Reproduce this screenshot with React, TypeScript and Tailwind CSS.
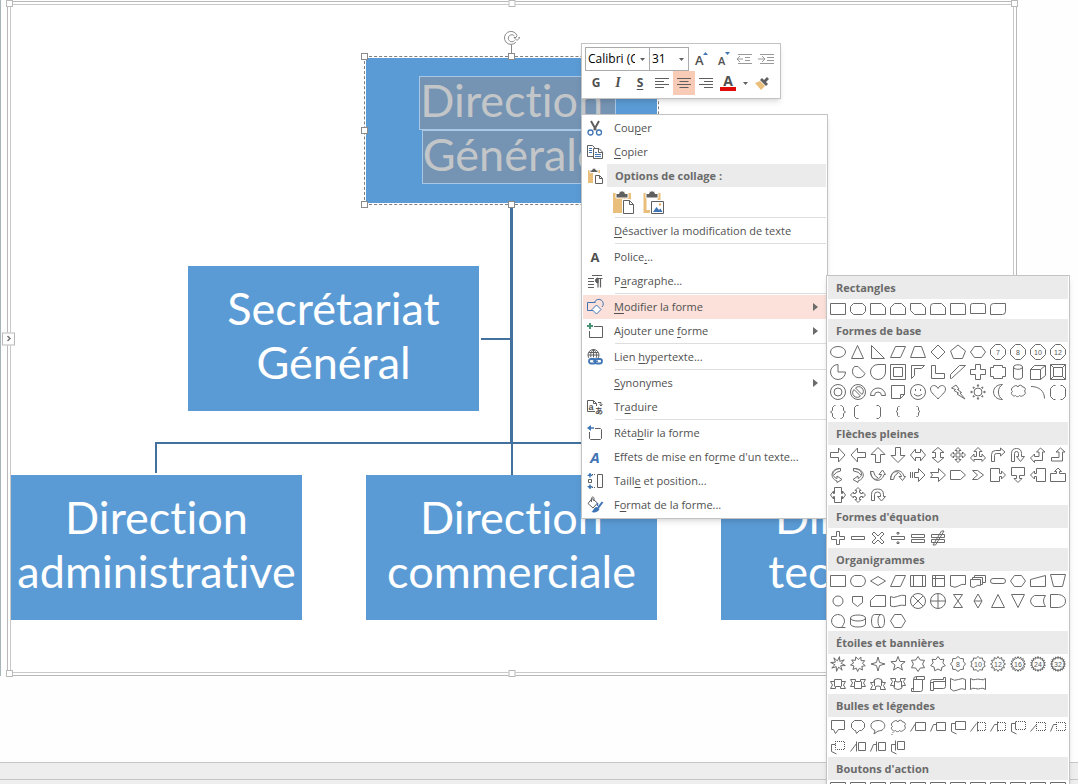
import type { ReactNode } from 'react';

type Shape = string | { d: string; label?: string; dashed?: string };

// Path of a star with n branches centred in a 16x16 box
function star(n: number, outer: number, inner: number, turn = 0) {
  const points: string[] = [];
  for (let i = 0; i < n * 2; i++) {
    const r = i % 2 ? inner : outer;
    const a = (Math.PI * i) / n - Math.PI / 2 + turn;
    points.push(`${(8 + r * Math.cos(a)).toFixed(2)} ${(8 + r * Math.sin(a)).toFixed(2)}`);
  }
  return `M${points.join('L')}z`;
}

const OCTAGON = 'M5.5.5h5l5 5v5l-5 5h-5l-5-5v-5z';
const CIRCLE = 'M.5 8a7.5 7.5 0 1 0 15 0a7.5 7.5 0 1 0-15 0z';
const CLOUD =
  'M2.5 7.5a2.5 2.5 0 0 1 1-4.5a2.5 2.5 0 0 1 4.5 0a2.3 2.3 0 0 1 4.5 0a2.3 2.3 0 0 1 2 4a2.3 2.3 0 0 1-1 4a2.5 2.5 0 0 1-4 .5a2.3 2.3 0 0 1-4 0a2.3 2.3 0 0 1-3.5-1a1.8 1.8 0 0 1 .5-3z';

const GALLERY: { title: string; shapes: Shape[] }[] = [
  {
    title: 'Rectangles',
    shapes: [
      'M.5 2.5h15v11h-15z',
      'M3.5 2.5h9l3 3v5l-3 3h-9l-3-3v-5z',
      'M.5 2.5h11l4 4v7h-15z',
      'M4.5 2.5h7l4 4v7h-15v-7z',
      'M.5 2.5h11l4 4v7h-11l-4-4z',
      'M3.5 2.5h8l4 4v7h-15v-8q0-3 3-3z',
      'M.5 2.5h13q2 0 2 2v9h-15z',
      'M2.5 2.5h11q2 0 2 2v8h-15v-8q0-2 2-2z',
      'M3.5 2.5h12v8q0 3-3 3h-12v-8q0-3 3-3z',
    ],
  },
  {
    title: 'Formes de base',
    shapes: [
      'M.5 8a7.5 5.5 0 1 0 15 0a7.5 5.5 0 1 0-15 0z',
      'M7.5 1.5l6 13h-12z',
      'M1.5 1.5v13h13z',
      'M5.5 2.5h10l-5 11h-10z',
      'M4.5 2.5h7l4 11h-15z',
      'M8 1l7 7-7 7-7-7z',
      'M8 1l7.5 6-3 7.5h-9l-3-7.5z',
      'M4.5 2.5h7l4 5.5-4 5.5h-7l-4-5.5z',
      { d: OCTAGON, label: '7' },
      { d: OCTAGON, label: '8' },
      { d: OCTAGON, label: '10' },
      { d: OCTAGON, label: '12' },
      'M8 .5A7.5 7.5 0 1 0 15.5 8H8z',
      'M4.5 2.5A6.5 6.5 0 1 0 15 9.5L8 2.5z',
      'M15.5.5v7.5a7.5 7.5 0 1 1-7.5-7.5z',
      'M.5.5h15v15h-15zM3.5 3.5h9v9h-9z',
      'M1.5 1.5h13l-3 3h-7v7l-3 3z',
      'M1.5 1.5h4v8h9v5h-13z',
      'M.5 10.5l9-9h6l-14 13h-1z',
      'M5.5.5h5v5h5v5h-5v5h-5v-5h-5v-5h5z',
      'M3.5 1.5h9v2h3v9h-3v2h-9v-2h-3v-9h3z',
      'M3.5 3v10c0 3 9 3 9 0v-10c0-3-9-3-9 0c0 3 9 3 9 0',
      'M.5 5.5h10v10h-10zM.5 5.5l4-4h11v10l-5 4M10.5 5.5l5-4',
      'M.5.5h15v15h-15zM3.5 3.5h9v9h-9zM.5.5l3 3M15.5.5l-3 3M.5 15.5l3-3M15.5 15.5l-3-3',
      `${CIRCLE}M4 8a4 4 0 1 0 8 0a4 4 0 1 0-8 0z`,
      `${CIRCLE}M4 5.5l6.5 6.5A4.5 4.5 0 0 1 4 5.5zM5.5 4l6.5 6.5A4.5 4.5 0 0 0 5.5 4z`,
      'M.5 11.5a7.5 7.5 0 0 1 15 0h-4a3.5 3.5 0 0 0-7 0z',
      'M1.5 1.5h13v9l-4 4h-9zM10.5 14.5v-4h4',
      `${CIRCLE}M5.5 5v2M10.5 5v2M4 10q4 4 8 0`,
      'M8 15C5 11 .5 9 .5 5C.5 1 6 0 8 4.5C10 0 15.5 1 15.5 5C15.5 9 11 11 8 15z',
      'M1.5 4l4.5-3 3 4-1.5.5 4 3-1.5.5 5 6-8-5 1.5-1-4.5-2.5 1.5-1z',
      'M4 8a4 4 0 1 0 8 0a4 4 0 1 0-8 0zM7 2l1-1.5 1 1.5zM7 14l1 1.5 1-1.5zM2 7l-1.5 1 1.5 1zM14 7l1.5 1-1.5 1zM3 3l1.5.5-1 1zM13 3l-1.5.5 1 1zM3 13l.5-1.5 1 1zM13 13l-.5-1.5-1 1z',
      'M12.5.5C.5.5.5 15.5 12.5 15.5C7 12.5 7 3.5 12.5.5z',
      CLOUD,
      'M1 2.5C9 2.5 14.5 7 14.5 14.5',
      'M5.5 1.5h-2l-3 3v8l3 3h2M10.5 1.5h2l3 3v8l-3 3h-2',
      'M5.5 1.5h-1l-2 2v3l-2 1.5 2 1.5v3l2 2h1M10.5 1.5h1l2 2v3l2 1.5-2 1.5v3l-2 2h-1',
      'M8.5 1.5h-2l-2 2v9l2 2h2',
      'M6.5 1.5h2l2 2v9l-2 2h-2',
      'M9.5 2.5h-1l-1 1v3l-1.5 1 1.5 1v3l1 1h1',
      'M6.5 2.5h1l1 1v3l1.5 1-1.5 1v3l-1 1h-1',
    ],
  },
  {
    title: 'Flèches pleines',
    shapes: [
      'M.5 5.5h8v-4.5l6.5 7-6.5 7v-4.5h-8z',
      'M15.5 5.5h-8v-4.5l-6.5 7 6.5 7v-4.5h8z',
      'M5.5 15.5v-8h-4.5l7-7 7 7h-4.5v8z',
      'M5.5.5v8h-4.5l7 7 7-7h-4.5v-8z',
      'M.5 8l5-6v3.5h5v-3.5l5 6-5 6v-3.5h-5v3.5z',
      'M8 .5l6 5h-3.5v5h3.5l-6 5-6-5h3.5v-5h-3.5z',
      'M8 .5l3 3h-2v3.5h3.5v-2l3 3-3 3v-2h-3.5v3.5h2l-3 3-3-3h2v-3.5h-3.5v2l-3-3 3-3v2h3.5v-3.5h-2z',
      'M8 .5l4 4h-2.5v5h2.5v-2.5l3.5 4-3.5 3.5v-2h-8v2l-3.5-3.5 3.5-4v2.5h2.5v-5h-2.5z',
      'M1.5 14.5v-7q0-4 4-4h5v-2.5l4.5 4-4.5 4v-2.5h-4q-2 0-2 2v6z',
      'M1.5 14.5v-8q0-5 5-5t5 5v3h3l-4 5-4-5h2v-3q0-2-2-2t-2 2v8z',
      'M.5 11l4-4v2.5h4.5v-4.5h-2.5l4-4 4.5 4h-2.5v8.5h-8v2z',
      'M1.5 10.5h7.5v-5.5h-3l4.5-4 4.5 4h-2.5v9h-11z',
      'M10.5 1.5C2.5 2 0 9 7 11.5v-2.5l5 3.5-5 3v-1.5C-1 11 1 1 10.5 1.5zM10.5 1.5v2.5Q6 4.5 4 8',
      'M3.5 1.5C12.5 2 14 9 8 11.5v-2.5l-5 3.5 5 3v-1.5C17 11 14 1 3.5 1.5zM3.5 1.5v2.5Q9 4.5 11 8',
      'M.5 4.5C1 13.5 9 15 11.5 7.5h-2.5l3.5-4.5 3 4.5h-1.5C12 16 1 15.5.5 4.5zM.5 4.5h3Q4 9 8 11',
      'M.5 12.5C1 3.5 9 2 11.5 9.5h-2.5l3.5 4 3-4h-1.5C12 1 1 1.5.5 12.5zM.5 12.5h3Q4 8 8 6',
      'M.5 5v6M2.5 5v6M4.5 5.5h4v-4l6.5 6.5-6.5 6.5v-4h-4z',
      'M.5 5.5h8v-4l7 6.5-7 6.5v-4h-8l2-2.5z',
      'M.5 3.5h10l5 4.5-5 4.5h-10z',
      'M2.5 3.5h5l6 4.5-6 4.5h-5l5-4.5z',
      'M.5 1.5h9v5h2v-2.5l4 4-4 4v-2.5h-2v5h-9z',
      'M1.5.5h13v8h-5v3h2.5l-4 4-4-4h2.5v-3h-5z',
      'M15.5 1.5h-9v5h-2v-2.5l-4 4 4 4v-2.5h2v5h9z',
      'M.5 14.5v-8h6v-2h-2l3.5-3.5 3.5 3.5h-2v2h6v8z',
      'M4.5.5h7v6h1v-2.5l3 4-3 4v-2.5h-1v6h-7v-6h-1v2.5l-3-4 3-4v2.5h1z',
      'M8 .5l3 3h-1.5v2h1v1h2v-1.5l3 3-3 3v-1.5h-2v1h-1v2h1.5l-3 3-3-3h1.5v-2h-1v-1h-2v1.5l-3-3 3-3v1.5h2v-1h1v-2h-1.5z',
      'M1.5 13.5v-6q0-5.5 6-5.5t6 5.5v2h2l-4 4.5-4-4.5h3v-2q0-2.5-3-2.5t-3 2.5v6z',
    ],
  },
  {
    title: "Formes d'équation",
    shapes: [
      'M6.5 1.5h3v5h5v3h-5v5h-3v-5h-5v-3h5z',
      'M1.5 6.5h13v3h-13z',
      'M4 2l4 4 4-4 2 2-4 4 4 4-2 2-4-4-4 4-2-2 4-4-4-4z',
      'M1.5 6.5h13v3h-13zM7 2.5h2v1.5h-2zM7 12h2v1.5h-2z',
      'M1.5 4.5h13v3h-13zM1.5 9.5h13v3h-13z',
      'M1.5 4.5h13v3h-13zM1.5 9.5h13v3h-13zM3 15l8.5-14h2.5l-8.5 14z',
    ],
  },
  {
    title: 'Organigrammes',
    shapes: [
      'M.5 2.5h15v11h-15z',
      'M4.5 2.5h7q4 1.5 4 5.5t-4 5.5h-7q-4-1.5-4-5.5t4-5.5z',
      'M8 3.5l7.5 4.5-7.5 4.5-7.5-4.5z',
      'M5.5 2.5h10l-5 11h-10z',
      'M.5 2.5h15v11h-15zM3.5 2.5v11M12.5 2.5v11',
      'M2.5 2.5h12v11h-12zM5.5 2.5v11M2.5 5.5h12',
      'M.5 2.5h15v9q-4-1-7 1.5t-8 0z',
      'M.5 6.5h10v6q-3-1-5 1t-5 0zM2.5 6.5v-2h10v7h-2M4.5 4.5v-2h11v7h-3',
      'M3 5.5h10q2.5 0 2.5 2.5t-2.5 2.5h-10q-2.5 0-2.5-2.5t2.5-2.5z',
      'M4.5 2.5h7l4 5.5-4 5.5h-7l-4-5.5z',
      'M.5 6.5l15-4v11h-15z',
      'M.5 1.5h15l-3 12h-9z',
      'M3 8a5 5 0 1 0 10 0a5 5 0 1 0-10 0z',
      'M2.5 3.5h10v6l-5 4-5-4z',
      'M5.5 2.5h10v11h-15v-6z',
      'M.5 3.5q3 2 7 0t8-1v10q-4-1-8 .5t-7 0z',
      `${CIRCLE}M3 3l10 10M13 3L3 13`,
      `${CIRCLE}M8 .5v15M.5 8h15`,
      'M3.5 1.5h9l-9 13h9z',
      'M8 1l4 7-4 7-4-7zM4 8h8',
      'M8 1.5l6.5 13h-13z',
      'M1.5 1.5h13l-6.5 13z',
      'M4.5 2.5h11q-4 5.5 0 11h-11q-4-2-4-5.5t4-5.5z',
      'M.5 1.5h8q7 1 7 6.5t-7 6.5h-8z',
      'M8 14.5a6.5 6.5 0 1 1 5.5-3l-2 3M8 14.5h7.5',
      'M.5 5v6c0 4 15 4 15 0v-6c0-4-15-4-15 0c0 4 15 4 15 0',
      'M4.5 1.5h7c4 0 4 13 0 13h-7c-4 0-4-13 0-13zM11 1.5c-4 0-4 13 0 13',
      'M4.5 1.5h7l4 6.5-4 6.5h-7l-4-6.5z',
    ],
  },
  {
    title: 'Étoiles et bannières',
    shapes: [
      star(8, 7.5, 3.2, 0.2),
      star(9, 7.5, 4.5, 0.4),
      star(4, 7, 2.2),
      star(5, 7.5, 3.2),
      star(6, 7.5, 4.6),
      star(7, 7.5, 5),
      { d: star(8, 7.5, 6), label: '8' },
      { d: star(10, 7.5, 6), label: '10' },
      { d: star(12, 7.5, 5.5), label: '12' },
      { d: star(16, 7.5, 5.5), label: '16' },
      { d: star(18, 7.5, 5.5), label: '24' },
      { d: star(20, 7.5, 5.5), label: '32' },
      'M.5 5.5h4v-2h7v2h4l-2 3.5 2 3.5h-5v-2h-5v2h-5l2-3.5zM4.5 5.5v5M11.5 5.5v5',
      'M.5 3.5h5v2h5v-2h5l-2 3.5 2 3.5h-4v2h-7v-2h-4l2-3.5zM4.5 5.5v5M11.5 5.5v5',
      'M.5 6.5h3l1-3q3.5-2 7 0l1 3h3l-2 3 2 4h-5v-3q-2.5-1-5 0v3h-5l2-4zM4.5 4v6M11.5 4v6',
      'M.5 2.5h5v3q2.5 1 5 0v-3h5l-2 3 2 4h-3l-1 3q-3.5 2-7 0l-1-3h-3l2-4zM4.5 5v6M11.5 5v6',
      'M3.5 14.5v-11q0-3 3-3h8v3h-2v10q0 2-2 2h-9v-3h2M3.5 3.5h9M6.5.5v3',
      'M.5 5.5q0-2 2-2h11v-2h2v9q0 2-2 2h-10v2h-3zM3.5 5.5h12M3.5 5.5v7M.5 6.5h3',
      'M.5 2.5q4 3 8 1t7 0v10q-4-2-8 .5t-7-1z',
      'M.5 2.5q3 2 5 1t5 0 5-1v11q-3-2-5-1t-5 0-5 1z',
    ],
  },
  {
    title: 'Bulles et légendes',
    shapes: [
      'M1.5 1.5h13v9h-6l-3 4-2-4h-2z',
      'M4.5 1.5h7l3 3v4l-3 3h-2l-3 3-1-3h-1l-3-3v-4z',
      'M5 11.5C-1.5 9 0 1.5 8 1.5C17 1.5 17 12 8 12l-4 3z',
      `${CLOUD}M2.5 13.5h1M1.5 15.5h1`,
      'M5.5 3.5h10v8h-10zM.5 12.5l5-8',
      'M6.5 3.5h9v8h-9zM6.5 5.5h-3l-3 7',
      'M5.5 2.5h10v8h-10zM5.5 4.5h-4v8l5 2.5',
      { d: 'M7.5 2.5v10M.5 12.5l6-8', dashed: 'M8 3.5h7.5v8h-7.5' },
      { d: 'M7.5 2.5v10M7.5 5.5h-3l-4 7', dashed: 'M8 3.5h7.5v8h-7.5' },
      { d: 'M5.5 2.5v8M5.5 4.5h-4v8l5 2.5', dashed: 'M6 2.5h9.5v8h-9.5' },
      { d: 'M.5 12.5l6-7', dashed: 'M6 3.5h9.5v8h-9v-8' },
      { d: 'M6.5 5.5h-3l-3 7', dashed: 'M6 3.5h9.5v8h-9v-8' },
      { d: 'M5.5 5.5h-4v7l5 2.5', dashed: 'M5 2.5h9.5v8h-9v-8' },
      'M8.5 3.5h7v8h-7zM6.5 2.5v10M.5 12.5l6-8',
      'M8.5 3.5h7v8h-7zM6.5 2.5v10M6.5 5.5h-3l-3 7',
      'M7.5 2.5h7v8h-7zM5.5 1.5v10M5.5 5.5h-4v7l5 2.5',
    ],
  },
  {
    title: "Boutons d'action",
    shapes: Array.from({ length: 12 }, () => 'M.5.5h15v15h-15zM3.5 8l7-4v8z'),
  },
];

function ShapeIcon({ shape }: { shape: Shape }) {
  const { d, label, dashed } = typeof shape === 'string' ? { d: shape, label: undefined, dashed: undefined } : shape;
  return (
    <svg viewBox="0 0 16 16" className="h-4 w-4" fill="none" stroke="#6b6b6b" aria-hidden="true">
      <path d={d} />
      {dashed && <path d={dashed} strokeDasharray="1 1" stroke="#555" />}
      {label && (
        <text x="8" y="10.5" textAnchor="middle" fill="#555" stroke="none" className="font-['Liberation_Sans'] text-[7px]">
          {label}
        </text>
      )}
    </svg>
  );
}

function Glyph({ children }: { children: ReactNode }) {
  return (
    <svg viewBox="0 0 16 16" className="h-4 w-4 overflow-visible" fill="none" stroke="#5f5f5f" aria-hidden="true">
      {children}
    </svg>
  );
}

const BLUE = '#3f74b5';

const cutIcon = (
  <Glyph>
    <path d="M4 1l5 9M12 1L7 10" strokeWidth="2" />
    <circle cx="3.5" cy="12.5" r="2.5" stroke={BLUE} strokeWidth="1.3" />
    <circle cx="12" cy="12.5" r="2.5" stroke={BLUE} strokeWidth="1.3" />
  </Glyph>
);

const copyIcon = (
  <Glyph>
    <path d="M6 12.5H.5v-11h5l2 2v1" />
    <path d="M6.5 4.5h5.5l3.5 3.5v6.5h-9z" fill="#fff" />
    <path d="M11.5 4.5v4h4" />
    <path d="M2 4.5h3M2 6.5h3M2 8.5h3M8 8.5h2M8 10.5h6M8 12.5h6" stroke={BLUE} />
  </Glyph>
);

const pasteIcon = (
  <Glyph>
    <path d="M1 2h12v13H1z" fill="#e9bf7b" stroke="none" />
    <path d="M3 2h2c0-2.5 4-2.5 4 0h2v2.5H3z" fill="#5f5f5f" stroke="#fff" />
    <path d="M7 6h6l3 3v7H7z" fill="#fff" stroke="#fff" strokeWidth="2" />
    <path d="M8.5 7.5h4l3 3v5h-7z" fill="#fff" />
    <path d="M12.5 7.5v3h3" />
  </Glyph>
);

const paragraphIcon = (
  <Glyph>
    <path d="M5 2.5h10M1 5.5h6M1 8.5h6M1 11.5h6M1 14.5h6" />
    <path d="M11 5.5v9M13.5 5.5v9M9.5 5.5h6" strokeWidth="1.2" />
    <path d="M11 5C7.5 5 7.5 10 11 10z" fill="#5f5f5f" />
  </Glyph>
);

const editShapeIcon = (
  <Glyph>
    <path d="M7 11.5H.5v-8h8" stroke={BLUE} />
    <path d="M7.5 3.5A4.5 4.5 0 1 1 15 8" stroke={BLUE} />
    <path d="M9.5 6l4.5 4.5-4.5 4.5L5 10.5z" fill="#fff" stroke={BLUE} />
  </Glyph>
);

const addShapeIcon = (
  <Glyph>
    <path d="M7 3.5h8.5v11H2.5V8" />
    <path d="M3 0v6M0 3h6" stroke="#4b9377" strokeWidth="2" />
  </Glyph>
);

const linkIcon = (
  <Glyph>
    <circle cx="6.5" cy="6" r="5.5" />
    <path d="M1 6h11M6.5.5v9M6.5.5C3 3 3 8 5 10M6.5.5C10 3 10 7 9 9M2 3.5h9" />
    <rect x="2" y="10" width="7" height="4.5" rx="2.2" stroke="#fff" strokeWidth="3.5" />
    <rect x="2" y="10" width="7" height="4.5" rx="2.2" stroke={BLUE} strokeWidth="1.8" />
    <rect x="8" y="10" width="7" height="4.5" rx="2.2" fill="#fff" stroke={BLUE} strokeWidth="1.8" />
    <path d="M6 12.2h5" stroke={BLUE} strokeWidth="1.5" />
  </Glyph>
);

const translateIcon = (
  <Glyph>
    <path d="M8 12.5H.5V1.5h6l3 3V7M6.5 1.5v3h3" />
    <path d="M11 3.5h3v3M12.5 5.5L14 7l1.5-1.5" />
    <text x="1.5" y="11" fill="#555" stroke="none" className="font-['Liberation_Sans'] text-[9px] font-bold">a</text>
    <text x="8" y="15" fill="#555" stroke="none" className="font-['Noto_Sans_CJK_JP'] text-[8px] font-bold">あ</text>
  </Glyph>
);

const resetShapeIcon = (
  <Glyph>
    <path d="M8 3.5h5.5l1 1v9l-1 1h-10l-1-1V7" />
    <path d="M2 3h5" stroke={BLUE} strokeWidth="1.5" />
    <path d="M4 0L0 3l4 3z" fill={BLUE} stroke="none" />
  </Glyph>
);

const sizeIcon = (
  <Glyph>
    <path d="M10.5 1.5h5v13h-5z" />
    <path d="M5 1.5h4M5 14.5h4" strokeDasharray="1 1" />
    <path d="M1.5 6.5h3v3h-3z" />
    <path d="M3 .5v4M3 11.5v4" stroke={BLUE} strokeWidth="1.5" />
    <path d="M0 3l3-3 3 3zM0 13l3 3 3-3z" fill={BLUE} stroke="none" />
  </Glyph>
);

const formatIcon = (
  <Glyph>
    <path d="M5 1.5L10.5 6 6 11 1 6.5zM4.5 5V1.5C4.5-.5 7-.5 7 1.5V4" />
    <path d="M10.5 6v3" stroke={BLUE} strokeWidth="1.5" />
    <path d="M15.5 5l-4.5 6" strokeWidth="2" stroke={BLUE} />
    <path d="M10 10l2.5 2c-1 3-5 4-8 3 2-1 2-5 5.5-5z" fill={BLUE} stroke="none" />
  </Glyph>
);

// "&" marks the access key of a label
function Label({ text }: { text: string }) {
  const at = text.indexOf('&');
  if (at < 0) return <span>{text}</span>;
  return (
    <span className="whitespace-pre">
      {text.slice(0, at)}
      <u className="underline-offset-2">{text[at + 1]}</u>
      {text.slice(at + 2)}
    </span>
  );
}

function MenuItem({ text, icon, submenu, active }: { text: string; icon?: ReactNode; submenu?: boolean; active?: boolean }) {
  return (
    <button
      type="button"
      role="menuitem"
      className={`flex h-6 w-full items-center pr-2 text-left ${active ? 'bg-[#fbe1da]' : 'hover:bg-[#fbe1da]'}`}
    >
      <span className="ml-1 mr-[11px] flex h-4 w-4 items-center justify-center">{icon}</span>
      <Label text={text} />
      {submenu && (
        <svg viewBox="0 0 5 8" className="ml-auto h-2 w-[5px]" fill="#6b6b6b" aria-hidden="true">
          <path d="M0 0l5 4-5 4z" />
        </svg>
      )}
    </button>
  );
}

function Separator() {
  return <div role="separator" className="ml-8 h-[2px] border-t border-[#dedede]" />;
}

function PasteChoice({ label, picture }: { label: string; picture?: boolean }) {
  return (
    <button type="button" aria-label={label} className="h-6 w-6">
      <svg viewBox="0 0 24 24" className="h-6 w-6" fill="none" stroke="#5f5f5f" aria-hidden="true">
        {picture ? (
          <path d="M9 20.5H3v-17h14V10" stroke="#e9bf7b" strokeWidth="3" />
        ) : (
          <path d="M1 2h18v20H1z" fill="#e9bf7b" stroke="none" />
        )}
        <path d="M4 2.5h3c0-3.5 6-3.5 6 0h3V7H4z" fill="#5f5f5f" stroke="#fff" />
        {picture ? (
          <>
            <path d="M8 9h15v15H8z" fill="#fff" stroke="none" />
            <path d="M9.5 10.5h12v12h-12z" fill="#fff" />
            <path d="M11 21l3.5-5 2.5 3 1.5-1.5 2 3.5z" fill={BLUE} stroke="none" />
            <path d="M17 12.5h2v2h-2z" fill="#e9a55b" stroke="none" />
          </>
        ) : (
          <>
            <path d="M10 8h8l5 5v11H10z" fill="#fff" stroke="none" />
            <path d="M11.5 9.5h6l4 4v9h-10z" fill="#fff" />
            <path d="M17.5 9.5v4h4" />
          </>
        )}
      </svg>
    </button>
  );
}

function ContextMenu() {
  return (
    <div role="menu" className="absolute left-[581px] top-[114px] w-[247px] border border-[#c3c3c3] bg-white p-px shadow-md">
      <MenuItem text="Cou&per" icon={cutIcon} />
      <MenuItem text="&Copier" icon={copyIcon} />
      <div className="flex h-6 items-start">
        <span className="mx-1 mt-1">{pasteIcon}</span>
        <span className="h-[23px] flex-1 bg-[#ebebeb] pl-2 font-bold leading-[23px] text-[#6a6a6a]">Options de collage :</span>
      </div>
      <div className="flex h-[29px] items-center gap-1.5 pl-[29px]">
        <PasteChoice label="Conserver uniquement le texte" />
        <PasteChoice label="Image" picture />
      </div>
      <Separator />
      <MenuItem text="&Désactiver la modification de texte" />
      <Separator />
      <MenuItem text="Police&..." icon={<b className="text-[13px]">A</b>} />
      <MenuItem text="P&aragraphe..." icon={paragraphIcon} />
      <Separator />
      <MenuItem text="&Modifier la forme" icon={editShapeIcon} submenu active />
      <MenuItem text="Ajouter une &forme" icon={addShapeIcon} submenu />
      <Separator />
      <MenuItem text="Lien &hypertexte..." icon={linkIcon} />
      <Separator />
      <MenuItem text="&Synonymes" submenu />
      <MenuItem text="Tr&aduire" icon={translateIcon} />
      <Separator />
      <MenuItem text="Réta&blir la forme" icon={resetShapeIcon} />
      <MenuItem text="Effets de mise en fo&rme d'un texte..." icon={<b className="text-[15px] italic text-[#3f74b5]">A</b>} />
      <MenuItem text="Taill&e et position..." icon={sizeIcon} />
      <MenuItem text="F&ormat de la forme..." icon={formatIcon} />
    </div>
  );
}

function ShapeGallery() {
  return (
    <div className="absolute left-[826px] top-[275px] w-[244px] border border-[#c3c3c3] bg-white px-px shadow-md">
      {GALLERY.map((group) => (
        <section key={group.title}>
          <h2 className="h-[23px] bg-[#ebebeb] pl-2 font-bold leading-[23px] text-[#6a6a6a]">{group.title}</h2>
          <div className="grid grid-cols-12">
            {group.shapes.map((shape, i) => (
              <button key={i} type="button" aria-label={`${group.title} ${i + 1}`} className="flex h-5 items-center justify-center">
                <ShapeIcon shape={shape} />
              </button>
            ))}
          </div>
        </section>
      ))}
    </div>
  );
}

function Combo({ label, value, className }: { label: string; value: string; className: string }) {
  return (
    <div className={`relative h-6 border border-[#ababab] bg-white text-xs ${className}`}>
      <select aria-label={label} defaultValue={value} className="h-full w-full appearance-none pl-0.5 pr-3.5 text-black outline-none">
        <option>{value}</option>
      </select>
      <svg viewBox="0 0 5 3" className="pointer-events-none absolute right-1 top-2.5 h-[3px] w-[5px]" fill="#5f5f5f" aria-hidden="true">
        <path d="M0 0h5L2.5 3z" />
      </svg>
    </div>
  );
}

function Tool({ label, active, children }: { label: string; active?: boolean; children: ReactNode }) {
  return (
    <button
      type="button"
      aria-label={label}
      className={`flex h-6 w-[22px] items-center justify-center text-xs text-[#505050] ${active ? 'bg-[#f8cbb6]' : ''}`}
    >
      {children}
    </button>
  );
}

function MiniToolbar() {
  return (
    <div className="absolute left-[581px] top-[43px] w-[200px] border border-[#c3c3c3] bg-white p-[3px] shadow-md">
      <div className="flex">
        <Combo label="Police" value="Calibri (Corps)" className="w-[65px]" />
        <Combo label="Taille de police" value="31" className="-ml-px w-10" />
        <Tool label="Augmenter la taille">
          <Glyph>
            <text x="3" y="14" fill="#505050" stroke="none" className="font-['Open_Sans'] text-[13px] font-semibold">A</text>
            <path d="M11 4l2.5-3L16 4z" fill={BLUE} stroke="none" />
          </Glyph>
        </Tool>
        <Tool label="Réduire la taille">
          <Glyph>
            <text x="4" y="14" fill="#505050" stroke="none" className="font-['Open_Sans'] text-[11px] font-semibold">A</text>
            <path d="M11 1l2.5 3L16 1z" fill={BLUE} stroke="none" />
          </Glyph>
        </Tool>
        <Tool label="Réduire le retrait">
          <Glyph>
            <g stroke="#999">
              <path d="M2 3.5h14M9 6.5h5M9 9.5h5M2 12.5h14M1 8h6M4 5L1 8l3 3" />
            </g>
          </Glyph>
        </Tool>
        <Tool label="Augmenter le retrait">
          <Glyph>
            <g stroke="#999">
              <path d="M2 3.5h14M9 6.5h7M9 9.5h7M2 12.5h14M0 8h7M4 5l3 3-3 3" />
            </g>
          </Glyph>
        </Tool>
      </div>
      <div className="flex">
        <Tool label="Gras"><b>G</b></Tool>
        <Tool label="Italique"><b className="font-['Liberation_Serif'] text-sm italic">I</b></Tool>
        <Tool label="Souligné"><b className="underline underline-offset-2">S</b></Tool>
        <Tool label="Aligner à gauche">
          <Glyph><path d="M1 3.5h14M1 6.5h9M1 9.5h14M1 12.5h9" /></Glyph>
        </Tool>
        <Tool label="Centrer" active>
          <Glyph><path d="M1 3.5h14M3.5 6.5h9M1 9.5h14M3.5 12.5h9" /></Glyph>
        </Tool>
        <Tool label="Aligner à droite">
          <Glyph><path d="M1 3.5h14M6 6.5h9M1 9.5h14M6 12.5h9" /></Glyph>
        </Tool>
        <Tool label="Couleur de police">
          <Glyph>
            <text x="8" y="11" textAnchor="middle" fill="#505050" stroke="none" className="font-['Open_Sans'] text-[14px] font-bold">A</text>
            <path d="M0 12h16v4H0z" fill="#e00b0b" stroke="none" />
          </Glyph>
        </Tool>
        <button type="button" aria-label="Autres couleurs" className="flex h-6 w-3 items-center justify-center">
          <svg viewBox="0 0 5 3" className="h-[3px] w-[5px]" fill="#5f5f5f" aria-hidden="true">
            <path d="M0 0h5L2.5 3z" />
          </svg>
        </button>
        <Tool label="Reproduire la mise en forme">
          <Glyph>
            <path d="M1 8l5-2 5 5-4 4z" fill="#e9bf7b" stroke="none" />
            <path d="M6 5l6 6 2-2-2-2 3-3-2-2-3 3-2-2z" fill="#5f5f5f" stroke="none" />
          </Glyph>
        </Tool>
      </div>
    </div>
  );
}

// Every box of the chart is 291x145, placed freely on the slide
function ChartBox({ className, children }: { className: string; children: ReactNode }) {
  return (
    <div
      className={`absolute flex h-[145px] w-[291px] flex-col items-center justify-center whitespace-nowrap bg-[#5b9bd5] font-['Lato'] text-[45px] leading-[54px] text-white [font-variant-ligatures:none] ${className}`}
    >
      {children}
    </div>
  );
}

// The highlight covers the trailing space, which hangs outside the centred text
function SelectedLine({ children }: { children: ReactNode }) {
  return <span className="-mr-3 border border-[#a9c8e6] bg-[#7593b3] pb-1.5 leading-[46px] text-[#c3c6c8]">{children}&nbsp;</span>;
}

function Handle({ className }: { className: string }) {
  return <span className={`absolute h-[7px] w-[7px] border bg-white ${className}`} />;
}

function OrgChart() {
  return (
    <>
      <svg className="absolute left-0 top-0 h-[680px] w-full" fill="none" stroke="#41719c" strokeWidth="2" aria-hidden="true">
        <path d="M512 443v32M481 339h31M156 473v-30h711v32" />
        <path d="M511.5 204v240" strokeWidth="3" />
      </svg>
      <ChartBox className="left-[366px] top-[58px] pb-0.5">
        <SelectedLine>Direction</SelectedLine>
        <SelectedLine>Générale</SelectedLine>
      </ChartBox>
      <ChartBox className="left-[188px] top-[266px] pb-2">
        <span>Secrétariat</span>
        <span>Général</span>
      </ChartBox>
      <ChartBox className="left-[11px] top-[475px] pb-2">
        <span>Direction</span>
        <span>administrative</span>
      </ChartBox>
      <ChartBox className="left-[366px] top-[475px] pb-2">
        <span>Direction</span>
        <span>commerciale</span>
      </ChartBox>
      <ChartBox className="left-[721px] top-[475px] pb-2">
        <span>Direction</span>
        <span>technique</span>
      </ChartBox>

      <div className="absolute left-[364px] top-[56px] h-[149px] w-[295px] border border-dashed border-[#7f7f7f]">
        <Handle className="-left-1 -top-1 border-[#8a8a8a]" />
        <Handle className="-top-1 left-[143px] border-[#8a8a8a]" />
        <Handle className="-left-1 top-[70px] border-[#8a8a8a]" />
        <Handle className="-bottom-1 -left-1 border-[#8a8a8a]" />
        <Handle className="-bottom-1 left-[143px] border-[#8a8a8a]" />
      </div>
      <svg viewBox="0 0 16 24" className="absolute left-[504px] top-[30px] h-6 w-4" fill="none" stroke="#8a8a8a" aria-hidden="true">
        <path d="M13 5.5A6.5 6.5 0 1 0 12 12M10.5 6a3.5 3.5 0 1 0 0 4.5M13 5.5l-1 2h-2l3 3 3-3h-1.5M7.5 14.5v9" />
      </svg>
    </>
  );
}

export default function App() {
  return (
    <div className="relative flex h-screen w-full flex-col overflow-hidden bg-[#fefefe] font-['Open_Sans','Noto_Sans',sans-serif] text-[11px] leading-4 text-[#505050]">
      <main className="relative flex flex-1 flex-col">
        <div className="mb-[86px] flex flex-1 border-l border-[#a9b4b8] pl-1.5 pr-[61px] pt-px">
          <div className="relative flex flex-1 border border-[#b9b9b9] p-0.5">
            <div className="flex-1 border border-[#c9c9c9] bg-white" />
            <Handle className="-left-0.5 -top-0.5 border-[#b9b9b9]" />
            <Handle className="-top-0.5 left-1/2 -translate-x-1/2 border-[#b9b9b9]" />
            <Handle className="-right-0.5 -top-0.5 border-[#b9b9b9]" />
            <Handle className="-bottom-0.5 -left-0.5 border-[#b9b9b9]" />
            <Handle className="-bottom-0.5 left-1/2 -translate-x-1/2 border-[#b9b9b9]" />
            <button
              type="button"
              aria-label="Ouvrir le volet de texte"
              className="absolute -left-1.5 top-1/2 z-10 flex h-[13px] w-[13px] -translate-y-1/2 items-center justify-center border border-[#b9b9b9] bg-white"
            >
              <svg viewBox="0 0 6 6" className="h-1.5 w-1.5" fill="none" stroke="#777" strokeWidth="1.5" aria-hidden="true">
                <path d="M1.5.5L4 3 1.5 5.5" />
              </svg>
            </button>
          </div>
        </div>
        <OrgChart />
      </main>
      <footer className="h-[22px] border-t border-[#c6c6c6] bg-[#eeeeee] pt-4">
        <div className="h-[5px] border-t border-[#c6c6c6]" />
      </footer>
      <MiniToolbar />
      <ContextMenu />
      <ShapeGallery />
    </div>
  );
}
